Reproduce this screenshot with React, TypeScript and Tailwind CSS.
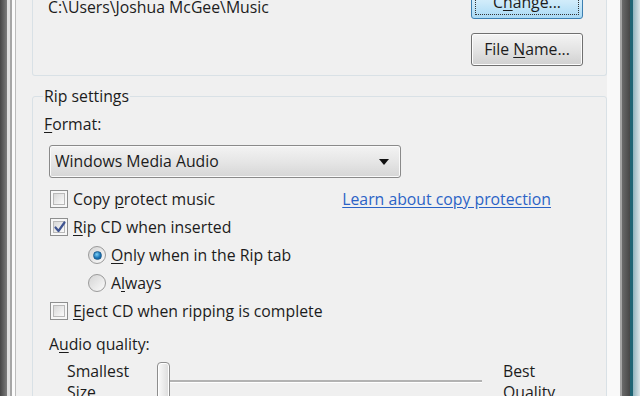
import type { ReactNode } from 'react';

const U = ({ children }: { children: ReactNode }) => <span className="underline underline-offset-2">{children}</span>;

function CheckBox({ checked = false }: { checked?: boolean }) {
  return (
    <div className="relative w-[18px] h-[18px] shrink-0 border border-[#8e8f8f] bg-[#f7f7f7] p-[2px]">
      <div className="w-full h-full border border-[#b9b9b9] bg-gradient-to-br from-[#d8d8d8] to-[#fbfbfb]" />
      {checked && (
        <svg className="absolute left-[2px] top-[1px]" width="14" height="14" viewBox="0 0 14 14">
          <path d="M2.5 7.5 L5.5 11 L11.5 2.5" fill="none" stroke="#3f5491" strokeWidth="2.2" strokeLinecap="round" strokeLinejoin="round" />
        </svg>
      )}
    </div>
  );
}

function Radio({ selected = false }: { selected?: boolean }) {
  return (
    <div className="w-[18px] h-[18px] shrink-0 rounded-full border border-[#9a9a9a] bg-gradient-to-br from-[#d4d4d4] to-[#fbfbfb] flex items-center justify-center">
      {selected && (
        <div className="w-[9px] h-[9px] rounded-full bg-[radial-gradient(circle_at_40%_35%,#7fd0f5,#1a76b8_55%,#0d4f85)] border border-[#1f5f92]" />
      )}
    </div>
  );
}

export default function App() {
  return (
    <div className="w-[640px] h-[396px] overflow-hidden flex bg-[#f0f0f0] text-[15.8px] leading-[21px] text-[#1c1c1c] font-['Open_Sans',sans-serif]">
      {/* left window frame */}
      <div className="w-[7px] bg-gradient-to-r from-[#454545] to-[#7c7c7c]" />
      <div className="w-[3px] bg-[#dedede]" />
      <div className="w-[2px] bg-[#a6a6a6]" />
      <div className="w-[3px] bg-[#fbfbfb]" />
      <div className="w-[1px] bg-[#bcbcbc]" />

      <div className="flex-1 flex flex-col pl-[16px]">
        {/* output folder group (top cut off) */}
        <div className="h-[76px] shrink-0 border-x border-b border-[#d9e1e6] rounded-b-[3px] flex justify-between">
          <div className="pl-[15px] mt-[-3px]">C:\Users\Joshua McGee\Music</div>
          <div className="mr-[23px] mt-[-14px] flex flex-col gap-[14px]">
            <button className="w-[112px] h-[33px] rounded-[3px] border border-[#3c7fb1] bg-gradient-to-b from-[#e9f6fd] via-[#cdeafa] to-[#a9daf5] p-[3px]">
              <div className="w-full h-full border border-dotted border-[#333] flex items-center justify-center">
                <span>C<U>h</U>ange...</span>
              </div>
            </button>
            <button className="w-[112px] h-[33px] rounded-[3px] border border-[#707070] bg-gradient-to-b from-[#f4f4f4] via-[#e4e4e4] to-[#d0d0d0] shadow-[inset_0_0_0_1px_#fcfcfc] flex items-center justify-center">
              <span>File <U>N</U>ame...</span>
            </button>
          </div>
        </div>

        {/* Rip settings */}
        <fieldset className="mt-[10px] border border-[#d9e1e6] rounded-[3px] flex-1 min-w-0">
          <legend className="ml-[10px] px-[1px] leading-[21px]">Rip settings</legend>

          <div className="pl-[11px] mt-[7px]">
            <U>F</U>ormat:
          </div>

          <div className="ml-[16px] mt-[10px] w-[352px] h-[33px] rounded-[3px] border border-[#8a8a8a] bg-gradient-to-b from-[#f3f3f3] via-[#e6e6e6] to-[#d6d6d6] shadow-[inset_0_0_0_1px_#fafafa] flex items-center justify-between pl-[5px] pr-[11px]">
            <span>Windows Media Audio</span>
            <svg width="10" height="6" viewBox="0 0 10 6">
              <path d="M0 0 H10 L5 6 Z" fill="#111" />
            </svg>
          </div>

          <div className="mt-[7px] h-[28px] flex items-center justify-between pl-[17px] pr-[55px]">
            <div className="flex items-center gap-[5px]">
              <CheckBox />
              <span>Copy <U>p</U>rotect music</span>
            </div>
            <span className="text-[#2b63c6] underline underline-offset-2">Learn about copy protection</span>
          </div>

          <div className="h-[28px] flex items-center gap-[5px] pl-[17px]">
            <CheckBox checked />
            <span><U>R</U>ip CD when inserted</span>
          </div>

          <div className="h-[28px] flex items-center gap-[5px] pl-[55px]">
            <Radio selected />
            <span><U>O</U>nly when in the Rip tab</span>
          </div>

          <div className="h-[28px] flex items-center gap-[5px] pl-[55px]">
            <Radio />
            <span>A<U>l</U>ways</span>
          </div>

          <div className="h-[28px] flex items-center gap-[5px] pl-[17px]">
            <CheckBox />
            <span><U>E</U>ject CD when ripping is complete</span>
          </div>

          <div className="mt-[9px] pl-[16px]">
            A<U>u</U>dio quality:
          </div>

          <div className="mt-[6px] flex items-start pl-[34px]">
            <div className="w-[90px]">
              Smallest
              <br />
              Size
            </div>
            <div className="w-[325px] h-[40px] flex items-start pt-[1px]">
              <div className="w-[13px] h-[40px] shrink-0 rounded-[4px] border border-[#8d8d8d] bg-gradient-to-r from-[#fafafa] to-[#dcdcdc] shadow-[inset_0_0_0_1px_#ffffff]" />
              <div className="flex-1 mt-[18px] h-[3px] border-t-2 border-[#b3b3b3] border-b border-b-[#ffffff]" />
            </div>
            <div className="ml-[21px]">
              Best
              <br />
              Quality
            </div>
          </div>
        </fieldset>
      </div>

      {/* right edge: tab page + window frame */}
      <div className="w-[13px] bg-[#f9f9f9]" />
      <div className="w-[2px] bg-[#a4a4a4]" />
      <div className="w-[8px] bg-gradient-to-r from-[#6a6a6a] to-[#474747]" />
      <div className="w-[3px] bg-[#1e6474]" />
      <div className="w-[7px] bg-gradient-to-r from-[#8fb3bd] to-[#dde6e9]" />
    </div>
  );
}
